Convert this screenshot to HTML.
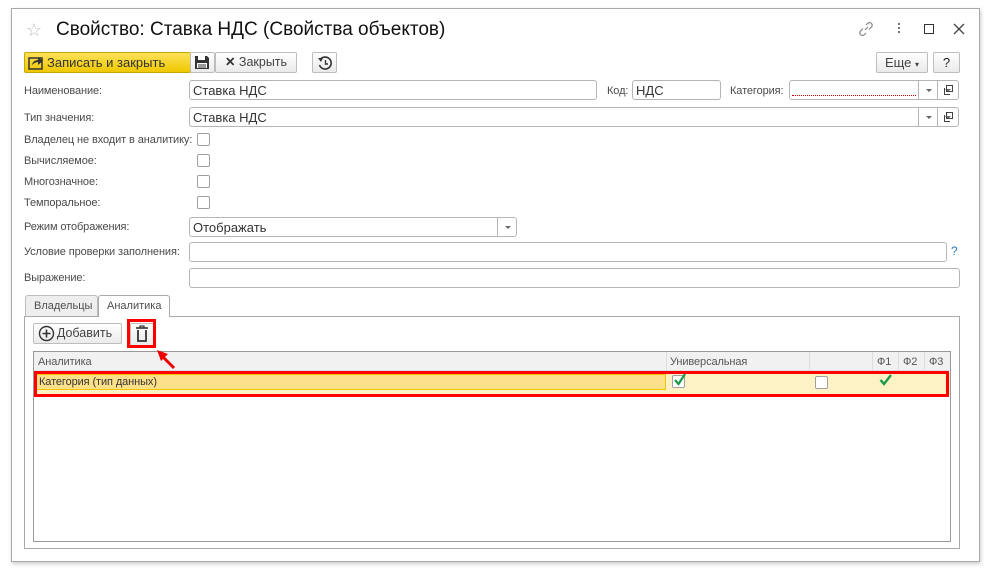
<!DOCTYPE html>
<html><head><meta charset="utf-8"><style>
*{box-sizing:border-box;margin:0;padding:0}
body{width:990px;height:570px;background:#fff;font-family:"Liberation Sans",Arial,sans-serif;font-size:12px;color:#4d4d4d;position:relative;overflow:hidden}
.a{position:absolute}
.win{left:11px;top:8px;width:969px;height:554px;border:1px solid #a8a8a8;box-shadow:1px 2px 4px rgba(0,0,0,.2);background:#fff}
.lbl{position:absolute;font-size:11px;color:#4a4a4a;white-space:nowrap;letter-spacing:-0.1px}
.inp{position:absolute;border:1px solid #b5b5b5;border-radius:3px;background:#fff;height:20px;font-size:13px;color:#333;padding:2px 0 0 3px;white-space:nowrap}
.btn{position:absolute;border:1px solid #bdbdbd;border-radius:2px;background:linear-gradient(#fff,#eaeaea);height:21px;font-size:12.5px;color:#444;text-align:center;line-height:19px}
.cb{position:absolute;width:13px;height:13px;border:1px solid #a0a0a0;border-radius:2px;background:#fff}
.dd{position:absolute;width:20px;height:20px;border:1px solid #b5b5b5;border-radius:0 3px 3px 0;background:#fff}
.dd:after{content:"";position:absolute;left:7px;top:8px;border:3px solid transparent;border-top:3px solid #666}
.vs{position:absolute;top:0;width:1px;height:100%;background:#ddd}
</style></head><body>
<div class="a win"></div>
<div class="a" style="left:26px;top:20px;font-size:18px;color:#bbb">☆</div>
<div class="a" style="left:56px;top:19px;font-size:19px;color:#111">Свойство: Ставка НДС (Свойства объектов)</div>
<svg class="a" style="left:858px;top:21px" width="16" height="16" viewBox="0 0 16 16"><g fill="none" stroke="#888" stroke-width="1.2"><path d="M7 9 L10 6"/><path d="M8 4 L10 2 Q12 1 13.5 2.5 Q15 4 13.5 6 L11 8.5"/><path d="M8 12 L6 14 Q4 15 2.5 13.5 Q1 12 2.5 10 L5 7.5"/></g></svg>
<div class="a" style="left:898px;top:23px;width:2px;height:2px;background:#777;box-shadow:0 4px #777,0 8px #777"></div>
<div class="a" style="left:924px;top:24px;width:10px;height:10px;border:1.5px solid #333"></div>
<svg class="a" style="left:953px;top:23px" width="12" height="12"><path d="M1 1 L11 11 M11 1 L1 11" stroke="#444" stroke-width="1.3"/></svg>

<div class="btn" style="left:24px;top:52px;width:167px;background:linear-gradient(#fbe15a,#f0c800);border-color:#c9a800;color:#333;font-size:13px;text-align:left;padding-left:22px">Записать и закрыть</div>
<svg class="a" style="left:28px;top:55px" width="16" height="15"><rect x="1" y="3" width="13" height="11" fill="none" stroke="#333" stroke-width="1.5"/><path d="M4 10 Q5 5 10 5 V2 L15 6 L10 10 V7 Q7 7 4 10Z" fill="#333"/></svg>
<div class="btn" style="left:190px;top:52px;width:25px"></div>
<svg class="a" style="left:194px;top:55px" width="16" height="15"><path d="M1 1 H13 L15 3 V14 H1Z" fill="#333"/><rect x="4" y="1" width="7" height="4" fill="#fff"/><rect x="3" y="8" width="10" height="5" fill="#fff"/><path d="M4 10 H12 M4 12 H12" stroke="#333"/></svg>
<div class="btn" style="left:215px;top:52px;width:82px;font-size:12.5px"><b style="color:#333">✕</b> Закрыть</div>
<div class="btn" style="left:312px;top:52px;width:25px"></div>
<svg class="a" style="left:317px;top:55px" width="16" height="16"><path d="M3 5 A6 6 0 1 1 2.5 10" fill="none" stroke="#333" stroke-width="1.6"/><path d="M1 3 L4 7 L6 3Z" fill="#333"/><path d="M8.5 5 V9 H11" fill="none" stroke="#333" stroke-width="1.4"/></svg>
<div class="btn" style="left:876px;top:52px;width:52px;font-size:13px">Еще <span style="font-size:8px">▾</span></div>
<div class="btn" style="left:933px;top:52px;width:27px;font-size:13px;color:#222">?</div>

<div class="lbl" style="left:24px;top:85px">Наименование:</div>
<div class="inp" style="left:189px;top:80px;width:408px">Ставка НДС</div>
<div class="lbl" style="left:607px;top:85px">Код:</div>
<div class="inp" style="left:632px;top:80px;width:89px">НДС</div>
<div class="lbl" style="left:730px;top:85px">Категория:</div>
<div class="inp" style="left:789px;top:80px;width:130px;border-radius:3px 0 0 3px"><div class="a" style="left:2px;right:2px;bottom:3px;border-bottom:1px dotted #c00"></div></div>
<div class="dd" style="left:918px;top:80px;border-radius:0"></div>
<div class="dd" style="left:937px;top:80px;width:22px"></div>
<svg class="a" style="left:943px;top:85px" width="11" height="11"><rect x="3.5" y="0.5" width="6" height="6" fill="none" stroke="#444"/><path d="M1.5 3 V9.5 H7" fill="none" stroke="#444"/></svg>

<div class="lbl" style="left:24px;top:112px">Тип значения:</div>
<div class="inp" style="left:189px;top:107px;width:730px;border-radius:3px 0 0 3px">Ставка НДС</div>
<div class="dd" style="left:918px;top:107px;border-radius:0"></div>
<div class="dd" style="left:937px;top:107px;width:22px"></div>
<svg class="a" style="left:943px;top:112px" width="11" height="11"><rect x="3.5" y="0.5" width="6" height="6" fill="none" stroke="#444"/><path d="M1.5 3 V9.5 H7" fill="none" stroke="#444"/></svg>

<div class="lbl" style="left:24px;top:134px">Владелец не входит в аналитику:</div><div class="cb" style="left:197px;top:133px"></div>
<div class="lbl" style="left:24px;top:155px">Вычисляемое:</div><div class="cb" style="left:197px;top:154px"></div>
<div class="lbl" style="left:24px;top:176px">Многозначное:</div><div class="cb" style="left:197px;top:175px"></div>
<div class="lbl" style="left:24px;top:197px">Темпоральное:</div><div class="cb" style="left:197px;top:196px"></div>

<div class="lbl" style="left:24px;top:221px">Режим отображения:</div>
<div class="inp" style="left:189px;top:217px;width:309px;border-radius:3px 0 0 3px">Отображать</div>
<div class="dd" style="left:497px;top:217px"></div>
<div class="lbl" style="left:24px;top:246px">Условие проверки заполнения:</div>
<div class="inp" style="left:189px;top:242px;width:758px"></div>
<div class="a" style="left:951px;top:244px;color:#2a7fc0;font-size:12px">?</div>
<div class="lbl" style="left:24px;top:272px">Выражение:</div>
<div class="inp" style="left:189px;top:268px;width:771px"></div>

<div class="a" style="left:24px;top:316px;width:936px;height:233px;border:1px solid #aaa"></div>
<div class="a" style="left:25px;top:295px;width:73px;height:21px;border:1px solid #bdbdbd;border-bottom:none;background:#eee;border-radius:3px 3px 0 0;font-size:11px;padding:4px 0 0 8px">Владельцы</div>
<div class="a" style="left:98px;top:295px;width:72px;height:22px;border:1px solid #aaa;border-bottom:none;background:#fff;border-radius:3px 3px 0 0;font-size:11px;padding:4px 0 0 8px">Аналитика</div>

<div class="btn" style="left:33px;top:323px;width:89px;padding-left:14px;font-size:12.5px">Добавить</div>
<svg class="a" style="left:38px;top:325px" width="17" height="17"><circle cx="8.5" cy="8.5" r="7" fill="none" stroke="#333" stroke-width="1.4"/><path d="M8.5 4.5 V12.5 M4.5 8.5 H12.5" stroke="#333" stroke-width="1.6"/></svg>
<div class="btn" style="left:130px;top:323px;width:24px;height:23px"></div>
<svg class="a" style="left:134px;top:325px" width="16" height="18"><path d="M2 3 H14" stroke="#333" stroke-width="1.6"/><path d="M6 3 V1 H10 V3" fill="none" stroke="#333" stroke-width="1.2"/><path d="M4 5 V16 H12 V5" fill="none" stroke="#333" stroke-width="1.8"/></svg>
<div class="a" style="left:127px;top:319px;width:29px;height:29px;border:3px solid #f00"></div>

<div class="a" style="left:33px;top:351px;width:918px;height:191px;border:1px solid #999;background:#fff">
 <div class="a" style="left:0;top:0;width:100%;height:19px;background:#f1f1f1;border-bottom:1px solid #ddd"></div>
 <div class="vs" style="left:632px;height:20px"></div><div class="vs" style="left:775px;height:20px"></div><div class="vs" style="left:838px;height:20px"></div><div class="vs" style="left:864px;height:20px"></div><div class="vs" style="left:890px;height:20px"></div>
 <div class="lbl" style="left:4px;top:4px;color:#555">Аналитика</div>
 <div class="lbl" style="left:636px;top:4px;color:#555">Универсальная</div>
 <div class="lbl" style="left:843px;top:4px;color:#555">Ф1</div>
 <div class="lbl" style="left:869px;top:4px;color:#555">Ф2</div>
 <div class="lbl" style="left:895px;top:4px;color:#555">Ф3</div>
 <div class="a" style="left:0;top:21px;width:100%;height:22px;background:#fdf1c6"></div>
 <div class="a" style="left:2px;top:22px;width:630px;height:16px;background:#fde08a;border:1px solid #f4c300"></div>
 <div class="lbl" style="left:5px;top:24px;color:#333">Категория (тип данных)</div>
 <div class="cb" style="left:638px;top:23px"></div>
 <svg class="a" style="left:639px;top:21px" width="14" height="14"><path d="M2 7 L5.5 11 L12 1" fill="none" stroke="#1a9a4a" stroke-width="2.2"/></svg>
 <div class="cb" style="left:781px;top:24px"></div>
 <svg class="a" style="left:845px;top:22px" width="14" height="12"><path d="M1.5 6 L5 10 L12 1" fill="none" stroke="#1a9a4a" stroke-width="2.4"/></svg>
</div>
<div class="a" style="left:34px;top:371px;width:915px;height:26px;border:3px solid #f00"></div>
<svg class="a" style="left:150px;top:343px" width="30" height="30"><path d="M24 25 L11 12" stroke="#e00" stroke-width="3"/><path d="M7 7 L18 11 L11 18Z" fill="#e00"/></svg>
</body></html>
